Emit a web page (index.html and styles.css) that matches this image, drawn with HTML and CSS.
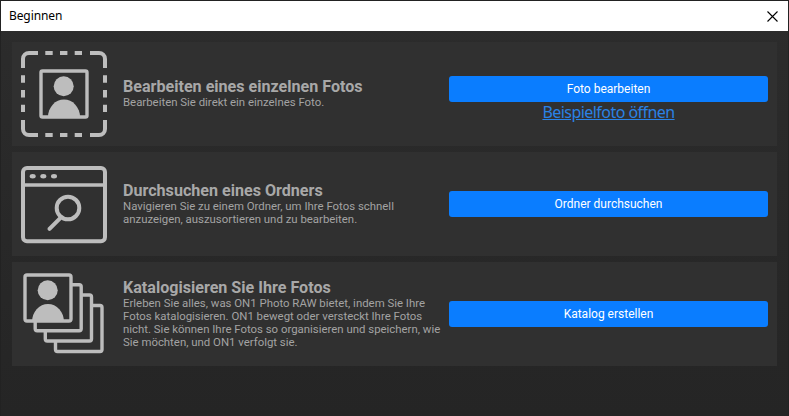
FILE: index.html
```html
<!DOCTYPE html>
<html lang="de">
<head>
<meta charset="utf-8">
<title>Beginnen</title>
<link rel="stylesheet" href="styles.css">
</head>
<body>
<div class="window">
  <header class="titlebar">
    <span class="title">Beginnen</span>
    <svg class="close" viewBox="0 0 11 11" width="11" height="11"><path d="M0.5 0.5 10.5 10.5M10.5 0.5 0.5 10.5" fill="none" stroke="#000" stroke-width="1.1"/></svg>
  </header>
  <main class="content">
    <section class="panel">
      <svg class="icon" viewBox="0 0 111 104" width="111" height="104">
        <g fill="none" stroke="#bdbdbd" stroke-width="4">
          <path d="M11 26V17a6 6 0 0 1 6-6h9M78 11h9a6 6 0 0 1 6 6v9M93 78v9a6 6 0 0 1-6 6h-9M26 93h-9a6 6 0 0 1-6-6v-9"/>
          <path d="M33.3 11h7.4M48 11h7.4M62.7 11H70M33.3 93h7.4M48 93h7.4M62.7 93H70M11 33.3v7.4M11 48v7.4M11 62.7V70M93 33.3v7.4M93 48v7.4M93 62.7V70"/>
          <rect x="29" y="29" width="46" height="46" rx="1.5" stroke-width="3.4"/>
        </g>
        <circle cx="51.7" cy="44.3" r="10" fill="#bdbdbd"/>
        <path d="M36 75a16 17.5 0 0 1 32 0z" fill="#bdbdbd"/>
      </svg>
      <div class="text">
        <h2 class="heading">Bearbeiten eines einzelnen Fotos</h2>
        <p class="desc">Bearbeiten Sie direkt ein einzelnes Foto.</p>
      </div>
      <div class="actions actions-first">
        <button class="btn">Foto bearbeiten</button>
        <a class="link" href="#">Beispielfoto öffnen</a>
      </div>
    </section>
    <section class="panel">
      <svg class="icon" viewBox="0 0 111 104" width="111" height="104">
        <g fill="none" stroke="#bdbdbd">
          <rect x="11" y="16" width="82" height="73.3" rx="4" stroke-width="4"/>
          <path d="M11 33h82" stroke-width="3.4"/>
          <circle cx="56" cy="56" r="11.3" stroke-width="4"/>
          <path d="M37.5 76.8 48 66.3" stroke-width="4" stroke-linecap="round"/>
        </g>
        <ellipse cx="20.7" cy="24.3" rx="3" ry="2.2" fill="#bdbdbd"/>
        <ellipse cx="31.3" cy="24.3" rx="3" ry="2.2" fill="#bdbdbd"/>
        <ellipse cx="42" cy="24.3" rx="3" ry="2.2" fill="#bdbdbd"/>
      </svg>
      <div class="text">
        <h2 class="heading">Durchsuchen eines Ordners</h2>
        <p class="desc">Navigieren Sie zu einem Ordner, um Ihre Fotos schnell anzuzeigen, auszusortieren und zu bearbeiten.</p>
      </div>
      <div class="actions">
        <button class="btn">Ordner durchsuchen</button>
      </div>
    </section>
    <section class="panel">
      <svg class="icon" viewBox="0 0 111 104" width="111" height="104">
        <g fill="#303030" stroke="#bdbdbd" stroke-width="3.4">
          <rect x="43.5" y="43.5" width="46.5" height="46" rx="2"/>
          <rect x="33.3" y="33" width="46.2" height="46" rx="2"/>
          <rect x="23.2" y="22.7" width="46" height="46" rx="2"/>
          <rect x="13" y="13" width="46" height="46" rx="2"/>
        </g>
        <circle cx="35.7" cy="28.3" r="10" fill="#bdbdbd"/>
        <path d="M20 60a16 18 0 0 1 32 0z" fill="#bdbdbd"/>
      </svg>
      <div class="text">
        <h2 class="heading">Katalogisieren Sie Ihre Fotos</h2>
        <p class="desc">Erleben Sie alles, was ON1 Photo RAW bietet, indem Sie Ihre Fotos katalogisieren. ON1 bewegt oder versteckt Ihre Fotos nicht. Sie können Ihre Fotos so organisieren und speichern, wie Sie möchten, und ON1 verfolgt sie.</p>
      </div>
      <div class="actions">
        <button class="btn">Katalog erstellen</button>
      </div>
    </section>
  </main>
</div>
</body>
</html>
```

FILE: styles.css
```css
* { box-sizing: border-box; }
html, body { margin: 0; height: 100%; }
body { background: #272727; overflow: hidden; }
.window {
  height: 416px;
  display: flex;
  flex-direction: column;
  border: 1px solid #222;
  border-width: 1px 1px 0 1px;
  background: linear-gradient(#2c2c2c, #252525);
}
.titlebar {
  height: 30px;
  flex: none;
  background: #fff;
  display: flex;
  align-items: center;
  justify-content: space-between;
  padding: 0 10px 0 8px;
}
.title {
  font: 12px/16px "Noto Sans", sans-serif;
  letter-spacing: -0.1px;
  color: #000;
}
.content {
  display: flex;
  flex-direction: column;
  gap: 6px;
  padding: 11px 11px 0 11px;
}
.panel {
  height: 104px;
  display: flex;
  align-items: center;
  background: #303030;
}
.icon { flex: none; }
.text {
  width: 326px;
  flex: none;
  padding-right: 6px;
  color: #a3a3a3;
  font-family: Roboto, sans-serif;
}
.heading {
  margin: 0 0 1px;
  font-size: 16.1px;
  line-height: 16px;
  font-weight: 700;
  color: #a8a8a8;
}
.desc {
  margin: 0;
  font-size: 11.4px;
  line-height: 13px;
}
.actions {
  width: 319px;
  flex: none;
  display: flex;
  flex-direction: column;
  align-items: center;
}
.actions-first {
  align-self: flex-start;
  padding-top: 34px;
}
.btn {
  width: 100%;
  height: 26px;
  border: 0;
  border-radius: 3px;
  background: #0a7dff;
  color: #fff;
  font: 12px/26px Roboto, sans-serif;
  padding: 0;
}
.link {
  font: 16px/20px "Noto Sans", sans-serif;
  letter-spacing: -0.55px;
  color: #2a82e6;
  text-decoration: underline;
}
```
